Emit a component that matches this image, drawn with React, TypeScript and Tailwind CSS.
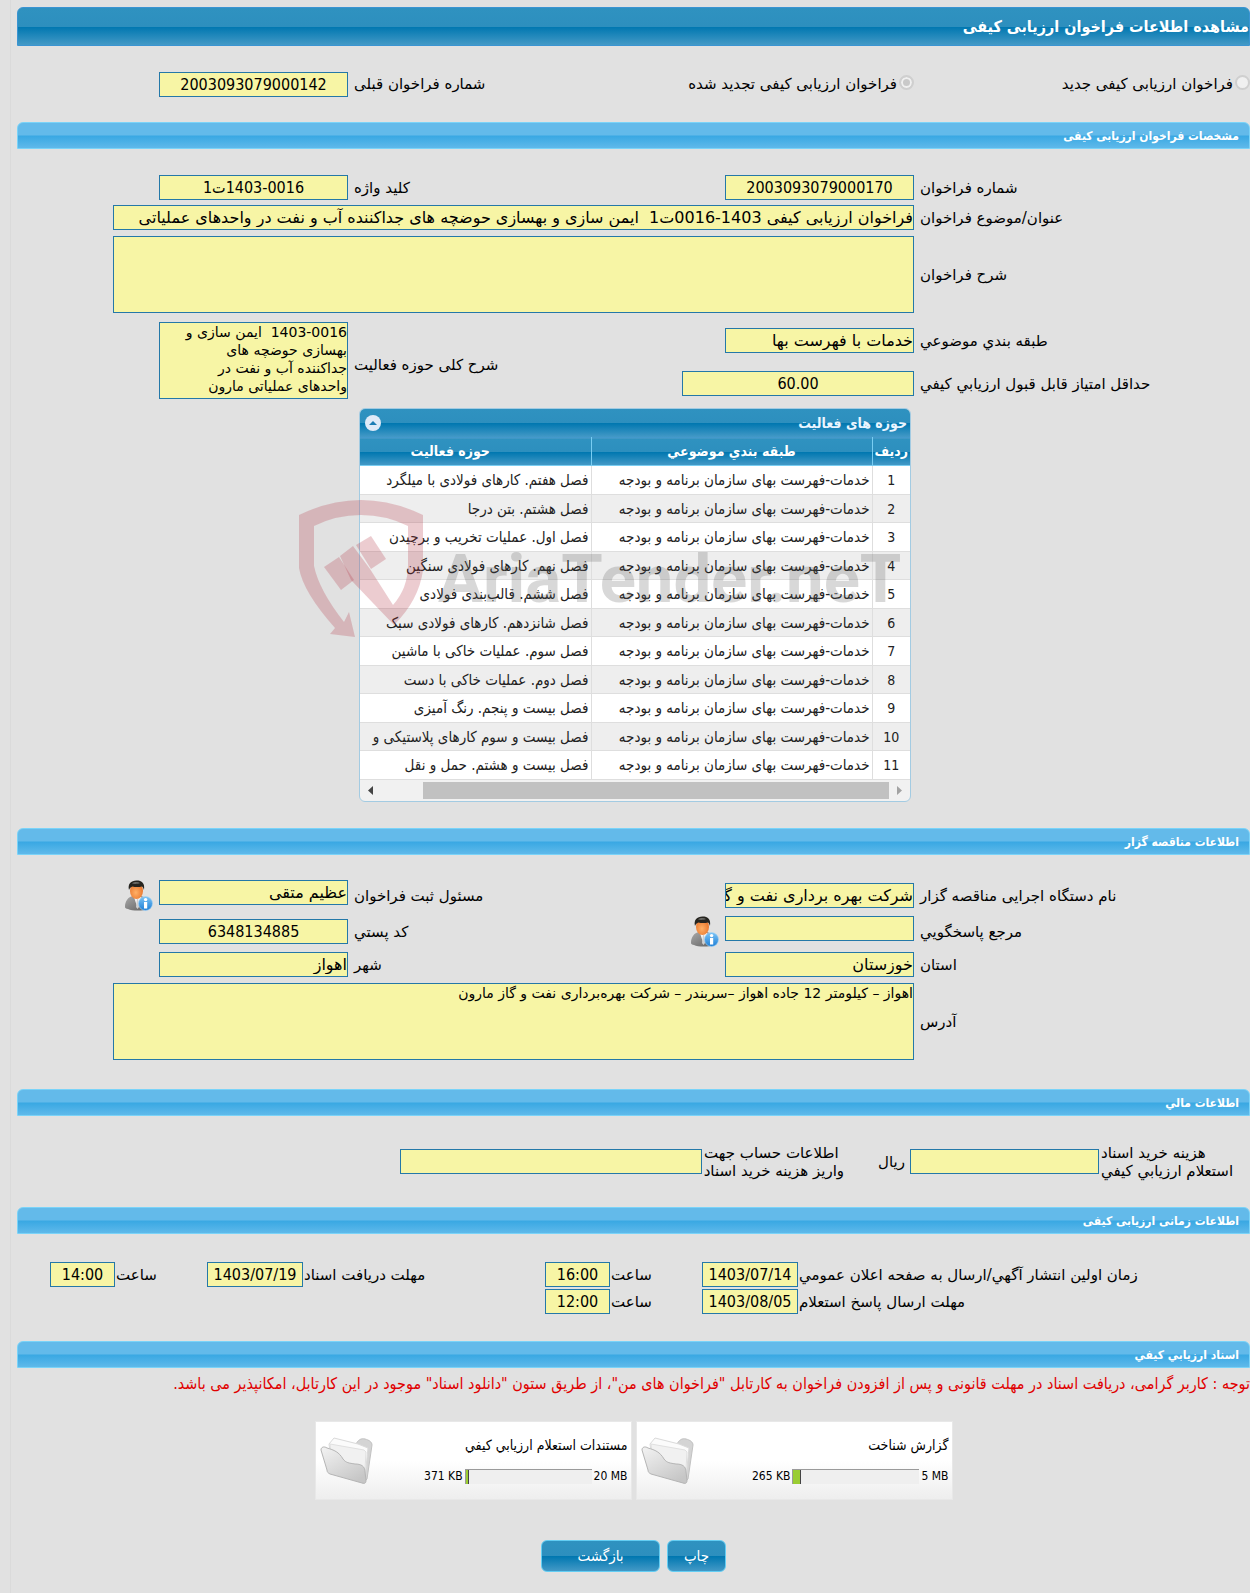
import { useState } from 'react'
import type { ReactNode } from 'react'
import clsx from 'clsx'

const BLUE_BAR = 'bg-[linear-gradient(#2f92c0_0%,#2d8fbe_50%,#0077b0_51%,#4399c6_100%)]'
const SKY_BAR = 'bg-[linear-gradient(#63baea_0%,#63baea_48%,#39a8e3_52%,#5fb9ea_100%)]'
const BOX = 'block border border-[#2478a8] bg-[#f7f5a5] p-0 text-black outline-none rounded-none'
const LABEL = "whitespace-nowrap font-['DejaVu_Sans',sans-serif] text-[15px] leading-[18px]"
const ROW = 'grid grid-cols-[330px_189px_1fr_189px_142px] gap-x-[6px]'

const CATEGORY = 'خدمات-فهرست بهای سازمان برنامه و بودجه'

const activities = [
  'فصل هفتم. کارهای فولادی با میلگرد',
  'فصل هشتم. بتن درجا',
  'فصل اول. عملیات تخریب و برچیدن',
  'فصل نهم. کارهای فولادی سنگین',
  'فصل ششم. قالب‌بندی فولادی',
  'فصل شانزدهم. کارهای فولادی سبک',
  'فصل سوم. عملیات خاکی با ماشین',
  'فصل دوم. عملیات خاکی با دست',
  'فصل بیست و پنجم. رنگ آمیزی',
  'فصل بیست و سوم کارهای پلاستیکی و',
  'فصل بیست و هشتم. حمل و نقل',
]

const documents = [
  { title: 'گزارش شناخت', used: '265 KB', limit: '5 MB', percent: 6 },
  { title: 'مستندات استعلام ارزيابي کيفي', used: '371 KB', limit: '20 MB', percent: 3 },
]

function Label({ id, children, className }: { id: string; children: ReactNode; className?: string }) {
  return (
    <label htmlFor={id} className={clsx(LABEL, 'text-left', className)}>
      {children}
    </label>
  )
}

function Field({ id, value = '', center, className }: { id: string; value?: string; center?: boolean; className?: string }) {
  return (
    <input
      id={id}
      type="text"
      readOnly
      value={value}
      className={clsx(
        BOX,
        'h-[25px] min-w-0 text-[16px]',
        center ? 'text-center' : "text-right font-['DejaVu_Sans',sans-serif]",
        className,
      )}
    />
  )
}

function Area({ id, value = '', className }: { id: string; value?: string; className?: string }) {
  return (
    <textarea
      id={id}
      readOnly
      value={value}
      className={clsx(BOX, "h-[77px] resize-none overflow-hidden font-['DejaVu_Sans',sans-serif] text-[14px] leading-[18px]", className)}
    />
  )
}

function SectionTitle({ children }: { children: ReactNode }) {
  return (
    <h2 className={clsx(SKY_BAR, 'flex h-[27px] items-center rounded-t-[6px] border border-[#7ad3f8] pr-[10px] text-[12px] font-bold text-white')}>
      {children}
    </h2>
  )
}

function UserIcon() {
  return (
    <svg viewBox="0 0 28 31" className="h-[31px] w-7 shrink-0">
      <defs>
        <linearGradient id="suit" x1="0" y1="0" x2="1" y2="1">
          <stop offset="0" stopColor="#a9a9a9" />
          <stop offset="1" stopColor="#5f5f5f" />
        </linearGradient>
        <radialGradient id="face" cx=".45" cy=".6" r=".6">
          <stop offset="0" stopColor="#ffb066" />
          <stop offset="1" stopColor="#e8742a" />
        </radialGradient>
        <linearGradient id="badge" x1="0" y1="0" x2="0" y2="1">
          <stop offset="0" stopColor="#7cc4f5" />
          <stop offset="1" stopColor="#1e7fd6" />
        </linearGradient>
      </defs>
      <path d="M0 27c0-6 3-10 8-11h8c4 1 7 4 7 8v5c-5 2-16 2-20 0-2-.4-3-1-3-2z" fill="url(#suit)" />
      <path d="M9 17l3.500 11 4-11z" fill="#f4f4f4" />
      <path d="M12 19l-1 8 1.500 2 1.500-2-1-8z" fill="#cfcfcf" />
      <ellipse cx="11.500" cy="11" rx="6.500" ry="8" fill="url(#face)" />
      <path d="M4 10C2.500 4 6 .5 11.500.5S20 3 19 10c-.6-2-1.200-3-2-3.500-3 .8-7 .8-9.500 0C6 7 4.600 8 4 10z" fill="#26241f" />
      <path d="M7 3.500c2-1.800 6-1.800 8-.5-2 1-6 1.200-8 .5z" fill="#6b6a66" />
      <circle cx="20.500" cy="23.500" r="7" fill="url(#badge)" stroke="#a5d4f5" strokeWidth=".6" />
      <rect x="19" y="22" width="3.200" height="6.500" fill="#fff" />
      <circle cx="20.600" cy="19.600" r="1.700" fill="#fff" />
    </svg>
  )
}

function FolderIcon() {
  return (
    <svg viewBox="0 0 54 48" className="h-12 w-[54px] shrink-0">
      <defs>
        <linearGradient id="front" x1="0" y1="0" x2=".7" y2="1">
          <stop offset="0" stopColor="#f3f3f3" />
          <stop offset="1" stopColor="#c6c6c6" />
        </linearGradient>
      </defs>
      <path d="M36 7c2-4 5-6 9-5 4 1 7 3 7 6l-5 34-4 4-6-4z" fill="#d4d4d4" stroke="#c2c2c2" />
      <path d="M14 1l24 6 10 4-3 30-33-12-3-22z" fill="#fbfbfb" stroke="#dadada" />
      <path d="M10 7l34 6 2 2-1 18-33-4z" fill="#f1f1f1" stroke="#e0e0e0" />
      <path d="M1 13c0-3 3-4 6-2 7 2 12 4 16 11 3 4 6 4 12 5 6 0 10 2 10 8l1 8c0 3-1 4-4 3L10 37c-2-1-3-2-3-4z" fill="url(#front)" stroke="#b5b5b5" />
    </svg>
  )
}

function Watermark() {
  return (
    <svg viewBox="0 0 620 140" className="pointer-events-none absolute -left-[60px] top-[92px] h-[140px] w-[620px]">
      <g fill="#b33343" fillOpacity=".25">
        <path d="M0 15Q31 0 62 0T124 15V70Q120 100 95 125L52 80 41 56 54 46 71 69 94 105Q109 88 109 65V26Q87 15 62 15T15 26V66Q20 90 45 122L50 112 56 137 31 134 36 128Q4 92 0 68Z" />
        <path d="M25 67L40 57 55 80 42 90Z" />
        <path d="M57 45L72 36 87 59 72 69Z" />
      </g>
      <text x="139" y="102" direction="ltr" fill="#555" fillOpacity=".23" className="font-['Roboto',sans-serif] text-[67px] font-bold">
        AriaTender.neT
      </text>
    </svg>
  )
}

function ActivityTable() {
  const [open, setOpen] = useState(true)

  return (
    <div className="relative mr-[339px] w-[552px]">
      <div className="overflow-hidden rounded-[6px] border border-[#a3cbe2] bg-[#f1f1f1]">
        <div className={clsx(BLUE_BAR, 'flex h-7 items-center justify-between pl-[5px] pr-[3px]')}>
          <h3 className="text-[14px] font-bold text-[#eaf5ff]">حوزه های فعالیت</h3>
          <button
            type="button"
            aria-label="جمع کردن"
            onClick={() => setOpen(!open)}
            className="flex size-4 items-center justify-center rounded-full bg-[#dfeaf8]"
          >
            <svg viewBox="0 0 8 4" className="h-1 w-2"><path d="M0 4L4 0l4 4z" fill="#1c7db5" /></svg>
          </button>
        </div>
        {open && (
          <>
            <table className="w-[600px] table-fixed border-collapse">
              <thead>
                <tr className={clsx(BLUE_BAR, 'h-7 border-b border-t border-b-[#79cdf2] border-t-[#4399cc] text-[14px] font-bold text-white')}>
                  <th className="w-[38px] border-l border-[#79cdf2] p-0">ردیف</th>
                  <th className="w-[281px] border-l border-[#79cdf2] p-0">طبقه بندي موضوعي</th>
                  <th className="p-0">حوزه فعالیت</th>
                </tr>
              </thead>
              <tbody>
                {activities.map((name, i) => (
                  <tr key={name} className="h-[29px] border-b border-[#dedede] bg-white leading-5 text-[#222] even:h-7 even:bg-[#eeeeee]">
                    <td className="border-l border-[#dedede] p-0 text-center text-[14px]">{i + 1}</td>
                    <td className="whitespace-nowrap border-l border-[#dedede] p-0 pr-[2px] text-[15px]">{CATEGORY}</td>
                    <td className="whitespace-nowrap p-0 pr-[2px] text-[15px]">{name}</td>
                  </tr>
                ))}
              </tbody>
            </table>
            <div className="flex h-[21px] items-center justify-between px-[8px]">
              <svg viewBox="0 0 5 9" className="h-[9px] w-[5px]"><path d="M0 0v9l5-4.500z" fill="#a3a3a3" /></svg>
              <div className="mr-2 h-[17px] w-[466px] bg-[#c1c1c1]" />
              <svg viewBox="0 0 5 9" className="mr-auto h-[9px] w-[5px]"><path d="M5 0v9L0 4.500z" fill="#444" /></svg>
            </div>
          </>
        )}
      </div>
      <Watermark />
    </div>
  )
}

function Radio({ id, label, checked }: { id: string; label: string; checked?: boolean }) {
  return (
    <div className="flex items-center gap-[2px]">
      <input
        id={id}
        name="call-type"
        type="radio"
        disabled
        checked={checked}
        readOnly
        className="mb-1 size-[15px] shrink-0 appearance-none rounded-full border-2 border-[#cfcfcf] bg-[#f0f0f0] checked:bg-[#c9c9c9] checked:shadow-[inset_0_0_0_2px_#f0f0f0]"
      />
      <label htmlFor={id} className={LABEL}>{label}</label>
    </div>
  )
}

export default function App() {
  return (
    <div dir="rtl" className="min-h-screen overflow-hidden bg-[#e1e1e1] font-['DejaVu_Sans_Condensed','DejaVu_Sans',sans-serif] text-black">
      <main className="ml-[10px] border-l border-[#dadada] pb-[21px] pt-[7px]">
        <header className={clsx(BLUE_BAR, 'ml-[6px] flex h-[39px] items-center rounded-t-[6px] border border-[#3a94d2]')}>
          <h1 className="text-[16px] font-bold text-white">مشاهده اطلاعات فراخوان ارزیابی کیفی</h1>
        </header>

        <div className={clsx(ROW, 'h-[76px] items-center')}>
          <Radio id="new" label="فراخوان ارزیابی کیفی جدید" />
          <Radio id="renewed" label="فراخوان ارزیابی کیفی تجدید شده" checked />
          <Label id="previous">شماره فراخوان قبلی</Label>
          <Field id="previous" value="2003093079000142" center />
        </div>

        <section className="ml-[6px]">
          <SectionTitle>مشخصات فراخوان ارزیابی کیفی</SectionTitle>
          <div className="-ml-[6px] pb-[26px] pt-[26px]">
            <div className={clsx(ROW, 'mb-[5px] items-center')}>
              <Label id="number">شماره فراخوان</Label>
              <Field id="number" value="2003093079000170" center />
              <Label id="keyword">کلید واژه</Label>
              <Field id="keyword" value="1403-0016ت1" center />
            </div>
            <div className="mb-[6px] flex items-center gap-[6px] pl-[102px]">
              <Label id="subject" className="w-[330px] shrink-0">عنوان/موضوع فراخوان</Label>
              <Field id="subject" value="فراخوان ارزیابی کیفی 1403-0016ت1  ایمن سازی و بهسازی حوضچه های جداکننده آب و نفت در واحدهای عملیاتی" className="flex-1" />
            </div>
            <div className="mb-[9px] flex items-center gap-[6px] pl-[102px]">
              <Label id="description" className="w-[330px] shrink-0">شرح فراخوان</Label>
              <Area id="description" className="flex-1" />
            </div>
            <div className={clsx(ROW, 'grid-rows-[37px_49px] items-center')}>
              <Label id="category">طبقه بندي موضوعي</Label>
              <Field id="category" value="خدمات با فهرست بها" />
              <Label id="scope" className="row-span-2">شرح کلی حوزه فعالیت</Label>
              <Area id="scope" value="1403-0016  ایمن سازی و بهسازی حوضچه های جداکننده آب و نفت در واحدهای عملیاتی مارون" className="row-span-2 self-start !pl-4" />
              <Label id="score" className="col-start-1">حداقل امتياز قابل قبول ارزيابي کيفي</Label>
              <Field id="score" value="60.00" center className="w-[232px]" />
            </div>
            <ActivityTable />
          </div>
        </section>

        <section className="ml-[6px]">
          <SectionTitle>اطلاعات مناقصه گزار</SectionTitle>
          <div className="-ml-[6px] flex flex-col gap-[6px] pb-[29px] pt-[25px]">
            <div className={clsx(ROW, 'h-[30px] items-center')}>
              <Label id="agency">نام دستگاه اجرایی مناقصه گزار</Label>
              <Field id="agency" value="شرکت بهره برداری نفت و گاز مارون" />
              <Label id="registrar">مسئول ثبت فراخوان</Label>
              <Field id="registrar" value="عظیم متقی" className="self-start" />
              <UserIcon />
            </div>
            <div className={clsx(ROW, 'h-[30px] items-center')}>
              <Label id="contact">مرجع پاسخگويي</Label>
              <Field id="contact" className="self-start" />
              <div className="flex items-center justify-between">
                <UserIcon />
                <Label id="postal">کد پستي</Label>
              </div>
              <Field id="postal" value="6348134885" center />
            </div>
            <div className={clsx(ROW, 'items-center')}>
              <Label id="province">استان</Label>
              <Field id="province" value="خوزستان" />
              <Label id="city">شهر</Label>
              <Field id="city" value="اهواز" />
            </div>
            <div className="flex items-center gap-[6px] pl-[102px]">
              <Label id="address" className="w-[330px] shrink-0">آدرس</Label>
              <Area id="address" value="اهواز – کیلومتر 12 جاده اهواز –سربندر – شرکت بهره‌برداری نفت و گاز مارون" className="flex-1" />
            </div>
          </div>
        </section>

        <section className="ml-[6px]">
          <SectionTitle>اطلاعات مالي</SectionTitle>
          <div className="flex h-[91px] items-center pr-[13px]">
            <Label id="cost" className="w-[136px]">هزینه خرید اسناد<br />استعلام ارزيابي کيفي</Label>
            <Field id="cost" className="mr-[2px] w-[189px]" />
            <span className={clsx(LABEL, 'mr-[5px]')}>ریال</span>
            <Label id="account" className="mr-[34px] w-[140px]">اطلاعات حساب جهت<br />واریز هزینه خرید اسناد</Label>
            <Field id="account" className="mr-[2px] w-[302px]" />
          </div>
        </section>

        <section className="ml-[6px]">
          <SectionTitle>اطلاعات زمانی ارزیابی کیفی</SectionTitle>
          <div className="-ml-[6px] flex flex-col gap-[2px] pb-[27px] pt-[28px]">
            <div className="flex items-center pl-[39px]">
              <Label id="publish" className="w-[452px] pl-[1px]">زمان اولین انتشار آگهي/ارسال به صفحه اعلان عمومي</Label>
              <Field id="publish" value="1403/07/14" center className="w-[96px]" />
              <Label id="publish-hour" className="w-[92px] pl-[1px]">ساعت</Label>
              <Field id="publish-hour" value="16:00" center className="w-[65px]" />
              <Label id="receive" className="flex-1 pl-[1px]">مهلت دریافت اسناد</Label>
              <Field id="receive" value="1403/07/19" center className="w-[96px]" />
              <Label id="receive-hour" className="w-[92px] pl-[1px]">ساعت</Label>
              <Field id="receive-hour" value="14:00" center className="w-[65px]" />
            </div>
            <div className="flex items-center">
              <Label id="reply" className="w-[452px] pl-[1px]">مهلت ارسال پاسخ استعلام</Label>
              <Field id="reply" value="1403/08/05" center className="w-[96px]" />
              <Label id="reply-hour" className="w-[92px] pl-[1px]">ساعت</Label>
              <Field id="reply-hour" value="12:00" center className="w-[65px]" />
            </div>
          </div>
        </section>

        <section className="ml-[6px]">
          <SectionTitle>اسناد ارزيابي کيفي</SectionTitle>
          <p className="whitespace-nowrap pt-[7px] text-[16px] leading-[18px] text-[#e00000]">
            توجه : کاربر گرامی، دریافت اسناد در مهلت قانونی و پس از افزودن فراخوان به کارتابل "فراخوان های من"، از طریق ستون "دانلود اسناد" موجود در این کارتابل، امکانپذیر می باشد.
          </p>
          <div className="mt-[28px] flex justify-center gap-1 text-[12px]">
            {documents.map(doc => (
              <article key={doc.title} className="flex h-[79px] w-[317px] items-center justify-between border border-[#e8e8e8] bg-[linear-gradient(#fff_50%,#eeeeee)] pl-[4px] pr-[3px]">
                <div className="flex flex-col gap-[15px]">
                  <h3 className="text-[14px] leading-4">{doc.title}</h3>
                  <div className="flex items-center gap-[2px] leading-4">
                    <span dir="ltr">{doc.limit}</span>
                    <div dir="ltr" className="h-[15px] w-[127px] border-l border-t border-[#9a9a9a] bg-[#efefef]">
                      <div className="h-full border-r border-[#444] bg-[#9acd32]" style={{ width: `${doc.percent}%` }} />
                    </div>
                    <span dir="ltr">{doc.used}</span>
                  </div>
                </div>
                <FolderIcon />
              </article>
            ))}
          </div>
        </section>

        <div className="ml-[6px] mt-[40px] flex justify-center gap-[7px] text-[15px] text-white">
          <button type="button" className={clsx(BLUE_BAR, 'h-8 w-[59px] rounded-[6px] border border-[#63cdf3]')}>چاپ</button>
          <button type="button" className={clsx(BLUE_BAR, 'h-8 w-[119px] rounded-[6px] border border-[#63cdf3]')}>بازگشت</button>
        </div>
      </main>
    </div>
  )
}
